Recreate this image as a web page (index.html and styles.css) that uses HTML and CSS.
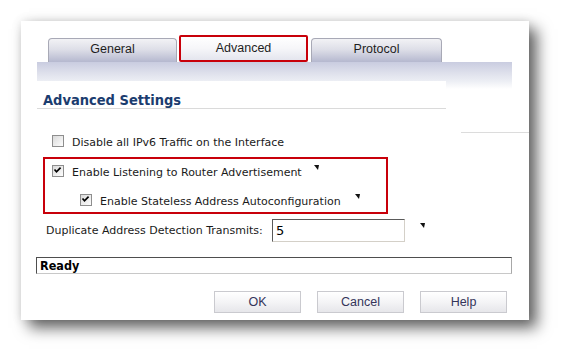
FILE: index.html
```html
<!DOCTYPE html>
<html>
<head>
<meta charset="utf-8">
<link rel="stylesheet" href="styles.css">
</head>
<body>
<div class="panel">
  <div class="tabs">
    <div class="tab">General</div>
    <div class="tab active">Advanced</div>
    <div class="tab wide">Protocol</div>
  </div>
  <div class="band"></div>
  <div class="head-row">
    <div class="title">Advanced Settings</div>
    <div class="fade"></div>
  </div>
  <div class="body-row">
    <div class="form">
      <div class="row first">
        <svg class="cb" width="12" height="12" viewBox="0 0 12 12"><defs><linearGradient id="g1" x1="0" y1="0" x2="1" y2="1"><stop offset="0" stop-color="#d8d8d8"/><stop offset="1" stop-color="#ffffff"/></linearGradient></defs><rect x="0.5" y="0.5" width="11" height="11" fill="url(#g1)" stroke="#8e8e8e"/></svg>
        <span class="label">Disable all IPv6 Traffic on the Interface</span>
      </div>
      <div class="highlight">
        <div class="row">
          <svg class="cb" width="12" height="12" viewBox="0 0 12 12"><defs><linearGradient id="g2" x1="0" y1="0" x2="1" y2="1"><stop offset="0" stop-color="#d8d8d8"/><stop offset="1" stop-color="#ffffff"/></linearGradient></defs><rect x="0.5" y="0.5" width="11" height="11" fill="url(#g2)" stroke="#8e8e8e"/><path d="M2.5 4.5 L4.5 6.8 L8.6 2.6" fill="none" stroke="#000" stroke-width="1.7"/></svg>
          <span class="label">Enable Listening to Router Advertisement</span>
          <svg class="mark" width="5" height="5" viewBox="0 0 5 5"><polygon points="0,0 5,0 4,5" fill="#111"/></svg>
        </div>
        <div class="row sub">
          <svg class="cb" width="12" height="12" viewBox="0 0 12 12"><defs><linearGradient id="g3" x1="0" y1="0" x2="1" y2="1"><stop offset="0" stop-color="#d8d8d8"/><stop offset="1" stop-color="#ffffff"/></linearGradient></defs><rect x="0.5" y="0.5" width="11" height="11" fill="url(#g3)" stroke="#8e8e8e"/><path d="M2.5 4.5 L4.5 6.8 L8.6 2.6" fill="none" stroke="#000" stroke-width="1.7"/></svg>
          <span class="label">Enable Stateless Address Autoconfiguration</span>
          <svg class="mark" width="5" height="5" viewBox="0 0 5 5"><polygon points="0,0 5,0 4,5" fill="#111"/></svg>
        </div>
      </div>
      <div class="row dup">
        <span class="label dup-label">Duplicate Address Detection Transmits:</span>
        <div class="input">5</div>
        <svg class="mark" width="5" height="5" viewBox="0 0 5 5"><polygon points="0,0 5,0 4,5" fill="#111"/></svg>
      </div>
    </div>
    <div class="side-line"></div>
  </div>
  <div class="status">Ready</div>
  <div class="buttons">
    <div class="btn">OK</div>
    <div class="btn">Cancel</div>
    <div class="btn">Help</div>
  </div>
</div>
</body>
</html>
```
FILE: styles.css
```css
html, body {
  margin: 0;
  padding: 0;
  background: #ffffff;
}
body {
  width: 571px;
  height: 362px;
  overflow: hidden;
  font-family: "DejaVu Sans", sans-serif;
}
.panel {
  margin: 21px 0 0 21px;
  width: 508px;
  height: 299px;
  background: #fff;
  box-shadow: 8px 8px 14px rgba(0,0,0,0.6), 0 0 10px rgba(0,0,0,0.12);
  padding-top: 14px;
  box-sizing: border-box;
}
.tabs {
  display: flex;
  align-items: flex-end;
  height: 27px;
  margin-left: 27px;
}
.tab {
  box-sizing: border-box;
  width: 129px;
  height: 24px;
  border: 1px solid #a8a9b6;
  border-bottom: none;
  border-radius: 4px 4px 0 0;
  background: linear-gradient(#f2f2f5, #dedfe8 45%, #b5b8cf);
  font-family: "Liberation Sans", Arial, sans-serif;
  font-size: 12.5px;
  color: #1e1e1e;
  display: flex;
  align-items: center;
  justify-content: center;
  padding-bottom: 4px;
}
.tab.active {
  height: 27px;
  margin-left: 2px;
  border: 2px solid #c8000a;
  border-radius: 2px;
  background: linear-gradient(#ffffff, #f6f6f9 50%, #e4e5ee);
  padding-bottom: 2px;
}
.tab.wide {
  width: 131px;
  margin-left: 3px;
}
.band {
  margin-left: 16px;
  width: 475px;
  height: 19px;
  background: linear-gradient(#c9cce0, #dfe1ec 60%, #eceef4);
}
.head-row {
  display: flex;
  margin-left: 16px;
}
.title {
  box-sizing: border-box;
  width: 409px;
  height: 28px;
  padding: 11px 0 0 6px;
  background: #fff;
  font-family: "DejaVu Sans Condensed", "DejaVu Sans", sans-serif;
  font-weight: bold;
  font-size: 14.5px;
  line-height: 16px;
  color: #1b3d6f;
  border-bottom: 1px solid #dadada;
}
.fade {
  width: 66px;
  height: 8px;
  background: linear-gradient(#eceef4, #ffffff);
}
.body-row {
  display: flex;
}
.form {
  flex: 1;
  padding-top: 22px;
}
.side-line {
  width: 68px;
  margin-top: 23px;
  height: 0;
  border-top: 1px solid #dcdcdc;
}
.row {
  display: flex;
  align-items: center;
  height: 22px;
  font-size: 11px;
  color: #1a1a1a;
}
.row.first {
  margin-left: 31px;
}
.cb {
  flex: none;
  margin-right: 8px;
  margin-top: -3px;
}
.label {
  white-space: nowrap;
}
.mark {
  align-self: flex-start;
  margin-top: 4px;
  margin-left: 12px;
}
.highlight {
  box-sizing: border-box;
  margin: 4px 0 0 22px;
  width: 345px;
  height: 57px;
  border: 2px solid #c8000a;
  padding: 2px 0 0 7px;
}
.highlight .row + .row {
  margin-top: 7px;
}
.row.sub {
  margin-left: 28px;
}
.row.sub .mark {
  margin-left: 14px;
}
.row.dup {
  margin: 5px 0 0 25px;
  height: 23px;
}
.dup-label {
  width: 226px;
}
.input {
  box-sizing: border-box;
  width: 133px;
  height: 23px;
  border-top: 1px solid #5a5a5a;
  border-left: 1px solid #5a5a5a;
  border-right: 1px solid #d4d0c8;
  border-bottom: 1px solid #d4d0c8;
  padding: 2px 0 0 3px;
  font-size: 13px;
  line-height: 18px;
  color: #000;
}
.row.dup .mark {
  margin-left: 15px;
}
.status {
  box-sizing: border-box;
  margin: 15px 0 0 15px;
  width: 476px;
  height: 17px;
  border-top: 1px solid #4e4e4e;
  border-left: 1px solid #4e4e4e;
  border-right: 1px solid #a8a8a8;
  border-bottom: 1px solid #c8c8c8;
  padding-left: 3px;
  font-family: "DejaVu Sans Condensed", "DejaVu Sans", sans-serif;
  font-weight: bold;
  font-size: 12.5px;
  line-height: 15px;
  color: #000;
}
.buttons {
  display: flex;
  justify-content: flex-end;
  gap: 16px;
  margin: 17px 22px 0 0;
}
.btn {
  box-sizing: border-box;
  width: 87px;
  height: 22px;
  border: 1px solid #cacacf;
  background: linear-gradient(#ffffff, #f4f4f6 50%, #e6e6ea);
  font-family: "Liberation Sans", Arial, sans-serif;
  font-size: 12.5px;
  color: #34345a;
  display: flex;
  align-items: center;
  justify-content: center;
}
```
